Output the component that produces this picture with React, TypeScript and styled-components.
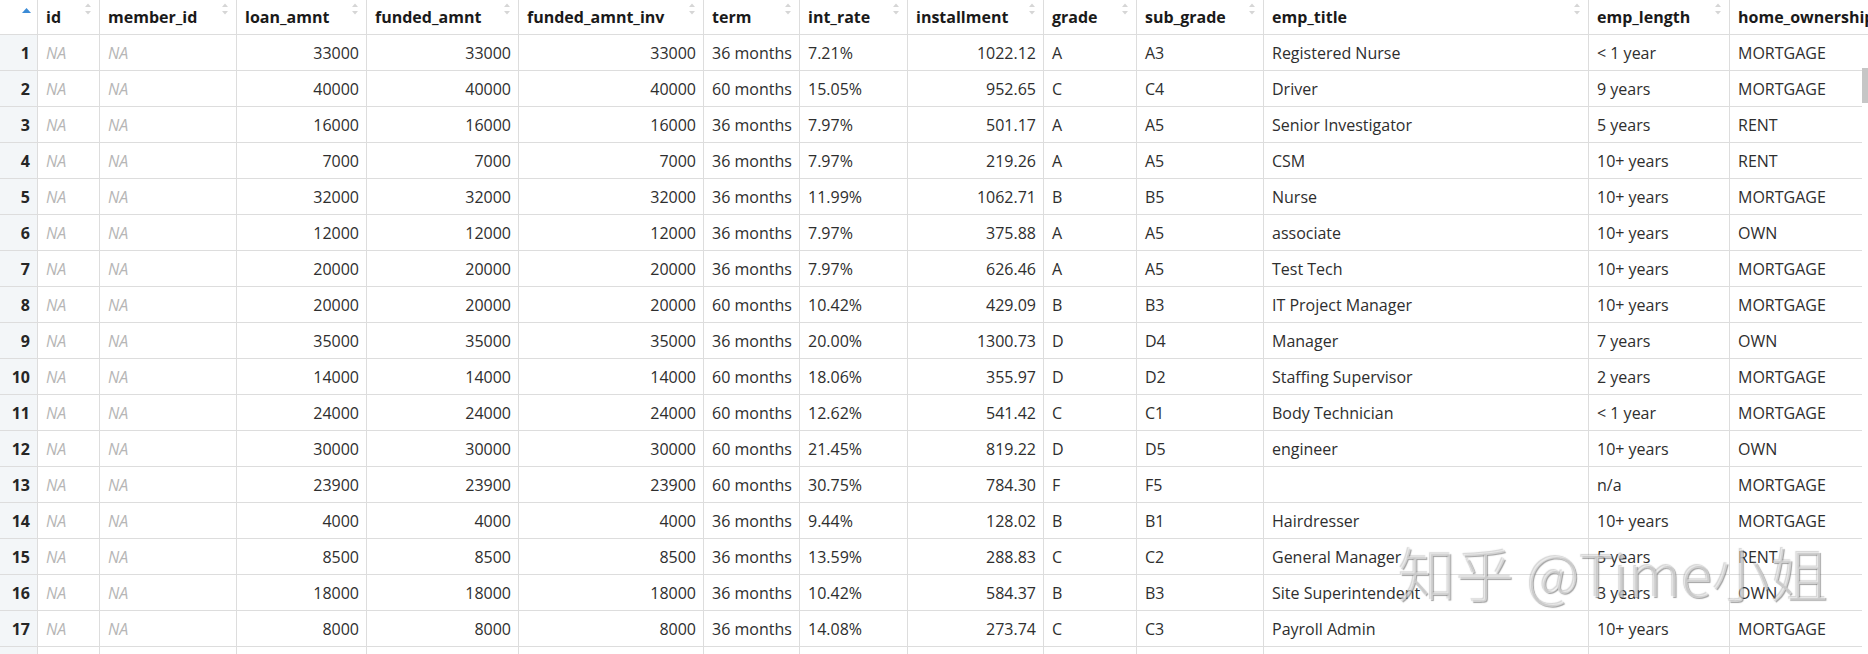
import React from "react";
import styled, { createGlobalStyle } from "styled-components";

const GlobalStyle = createGlobalStyle`
  html, body {
    margin: 0;
    padding: 0;
    background: #ffffff;
    overflow: hidden;
  }
  body {
    font-family: "Open Sans", "Noto Sans", "Liberation Sans", sans-serif;
  }
`;

type Align = "left" | "right";

interface Column {
  key: string;
  label: string;
  width: number;
  align: Align;
  na?: boolean;
}

const columns: Column[] = [
  { key: "id", label: "id", width: 62, align: "left", na: true },
  { key: "member_id", label: "member_id", width: 137, align: "left", na: true },
  { key: "loan_amnt", label: "loan_amnt", width: 130, align: "right" },
  { key: "funded_amnt", label: "funded_amnt", width: 152, align: "right" },
  { key: "funded_amnt_inv", label: "funded_amnt_inv", width: 185, align: "right" },
  { key: "term", label: "term", width: 96, align: "left" },
  { key: "int_rate", label: "int_rate", width: 108, align: "left" },
  { key: "installment", label: "installment", width: 136, align: "right" },
  { key: "grade", label: "grade", width: 93, align: "left" },
  { key: "sub_grade", label: "sub_grade", width: 127, align: "left" },
  { key: "emp_title", label: "emp_title", width: 325, align: "left" },
  { key: "emp_length", label: "emp_length", width: 141, align: "left" },
  { key: "home_ownership", label: "home_ownership", width: 220, align: "left" },
];

const ROWNUM_W = 38;
const template = [ROWNUM_W, ...columns.map((c) => c.width)].map((w) => `${w}px`).join(" ");

type RowData = [string, string, string, string, string, string, string, string, string, string, string];

// loan, funded, funded_inv, term, rate, installment, grade, sub_grade, title, length, ownership
const rows: RowData[] = [
  ["33000", "33000", "33000", "36 months", "7.21%", "1022.12", "A", "A3", "Registered Nurse", "< 1 year", "MORTGAGE"],
  ["40000", "40000", "40000", "60 months", "15.05%", "952.65", "C", "C4", "Driver", "9 years", "MORTGAGE"],
  ["16000", "16000", "16000", "36 months", "7.97%", "501.17", "A", "A5", "Senior Investigator", "5 years", "RENT"],
  ["7000", "7000", "7000", "36 months", "7.97%", "219.26", "A", "A5", "CSM", "10+ years", "RENT"],
  ["32000", "32000", "32000", "36 months", "11.99%", "1062.71", "B", "B5", "Nurse", "10+ years", "MORTGAGE"],
  ["12000", "12000", "12000", "36 months", "7.97%", "375.88", "A", "A5", "associate", "10+ years", "OWN"],
  ["20000", "20000", "20000", "36 months", "7.97%", "626.46", "A", "A5", "Test Tech", "10+ years", "MORTGAGE"],
  ["20000", "20000", "20000", "60 months", "10.42%", "429.09", "B", "B3", "IT Project Manager", "10+ years", "MORTGAGE"],
  ["35000", "35000", "35000", "36 months", "20.00%", "1300.73", "D", "D4", "Manager", "7 years", "OWN"],
  ["14000", "14000", "14000", "60 months", "18.06%", "355.97", "D", "D2", "Staffing Supervisor", "2 years", "MORTGAGE"],
  ["24000", "24000", "24000", "60 months", "12.62%", "541.42", "C", "C1", "Body Technician", "< 1 year", "MORTGAGE"],
  ["30000", "30000", "30000", "60 months", "21.45%", "819.22", "D", "D5", "engineer", "10+ years", "OWN"],
  ["23900", "23900", "23900", "60 months", "30.75%", "784.30", "F", "F5", "", "n/a", "MORTGAGE"],
  ["4000", "4000", "4000", "36 months", "9.44%", "128.02", "B", "B1", "Hairdresser", "10+ years", "MORTGAGE"],
  ["8500", "8500", "8500", "36 months", "13.59%", "288.83", "C", "C2", "General Manager", "5 years", "RENT"],
  ["18000", "18000", "18000", "36 months", "10.42%", "584.37", "B", "B3", "Site Superintendent", "3 years", "OWN"],
  ["8000", "8000", "8000", "36 months", "14.08%", "273.74", "C", "C3", "Payroll Admin", "10+ years", "MORTGAGE"],
  ["10000", "10000", "10000", "36 months", "11.99%", "332.10", "B", "B5", "Teacher", "10+ years", "RENT"],
];

const Page = styled.div`
  position: relative;
  width: 1868px;
  height: 654px;
  overflow: hidden;
  background: #ffffff;
  color: #333333;
  font-size: 16px;
`;

const HeaderRow = styled.div`
  display: grid;
  grid-template-columns: ${template};
  height: 35px;
  background: #ffffff;
`;

const Body = styled.div`
  display: flex;
  height: 619px;
`;

const RowsArea = styled.div`
  flex: 1;
  min-width: 0;
  overflow: hidden;
`;

const DataRow = styled.div`
  display: grid;
  grid-template-columns: ${template};
  height: 36px;
`;

const BaseCell = styled.div<{ $align?: Align }>`
  box-sizing: border-box;
  display: flex;
  align-items: center;
  justify-content: ${(p) => (p.$align === "right" ? "flex-end" : "flex-start")};
  padding: 0 7px 0 8px;
  border-right: 1px solid #dddddd;
  border-bottom: 1px solid #dddddd;
  white-space: nowrap;
  overflow: hidden;
  line-height: 1;
`;

const HeadCell = styled(BaseCell)`
  position: relative;
  font-weight: 700;
  color: #1a1a1a;
  padding-bottom: 1px;
`;

const CornerCell = styled(BaseCell)`
  position: relative;
  background: #ffffff;
`;

const RowNumCell = styled(BaseCell)`
  justify-content: flex-end;
  background: #f3f6f8;
  font-weight: 700;
  color: #262626;
`;

const Cell = styled(BaseCell)<{ $na?: boolean }>`
  color: ${(p) => (p.$na ? "#b6b6b6" : "#2e2e2e")};
  font-style: ${(p) => (p.$na ? "italic" : "normal")};
  font-weight: 400;
`;

const SortIcon = styled.svg`
  position: absolute;
  top: 3px;
  right: 8px;
  width: 6px;
  height: 12px;
`;

const ActiveSort = styled.svg`
  position: absolute;
  top: 8px;
  left: 22px;
  width: 9px;
  height: 5px;
`;

const ScrollTrack = styled.div`
  width: 6px;
  flex: 0 0 6px;
  background: #ffffff;
  padding-top: 33px;
  box-sizing: border-box;
`;

const ScrollThumb = styled.div`
  width: 6px;
  height: 35px;
  background: #c6c6c6;
`;

const Watermark = styled.div`
  position: absolute;
  left: 1398px;
  top: 541px;
  font-family: "Noto Sans CJK SC", "Open Sans", sans-serif;
  font-weight: 300;
  font-size: 58px;
  line-height: 1.1;
  white-space: nowrap;
  color: rgba(255, 255, 255, 0.5);
  text-shadow: 1px 1px 1px rgba(100, 100, 100, 0.6), -1px -1px 1px rgba(150, 150, 150, 0.4);
  pointer-events: none;
`;

const SortArrows = () => (
  <SortIcon viewBox="0 0 6 12">
    <polygon points="0,4 3,0.5 6,4" fill="#d6d6d6" />
    <polygon points="0,8 3,11.5 6,8" fill="#d6d6d6" />
  </SortIcon>
);

export default function App() {
  return (
    <>
      <GlobalStyle />
      <Page>
        <HeaderRow>
          <CornerCell>
            <ActiveSort viewBox="0 0 9 5">
              <polygon points="0,5 4.5,0 9,5" fill="#3b8bd6" />
            </ActiveSort>
          </CornerCell>
          {columns.map((c) => (
            <HeadCell key={c.key} $align="left">
              {c.label}
              <SortArrows />
            </HeadCell>
          ))}
        </HeaderRow>
        <Body>
          <RowsArea>
            {rows.map((r, i) => {
              const values = ["NA", "NA", ...r];
              return (
                <DataRow key={i}>
                  <RowNumCell>{i + 1}</RowNumCell>
                  {columns.map((c, j) => (
                    <Cell key={c.key} $align={c.align} $na={c.na}>
                      {values[j]}
                    </Cell>
                  ))}
                </DataRow>
              );
            })}
          </RowsArea>
          <ScrollTrack>
            <ScrollThumb />
          </ScrollTrack>
        </Body>
        <Watermark>知乎 @Time小姐</Watermark>
      </Page>
    </>
  );
}
